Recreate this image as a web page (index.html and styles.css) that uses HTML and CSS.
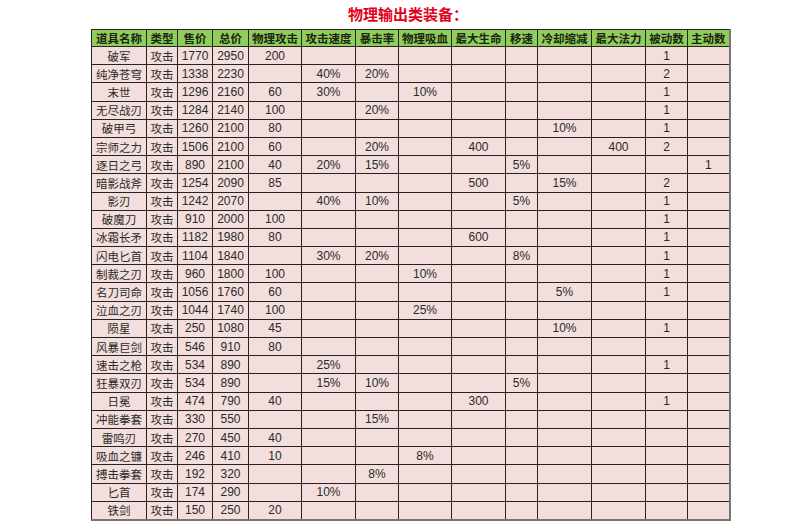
FILE: index.html
```html
<!DOCTYPE html>
<html lang="zh">
<head>
<meta charset="utf-8">
<link rel="stylesheet" href="styles.css">
</head>
<body>
<div class="page">
  <h1 class="title">物理输出类装备：</h1>
  <table class="equip">
    <colgroup>
      <col class="c55"><col class="c31"><col class="c35"><col class="c36"><col class="c53"><col class="c54"><col class="c43"><col class="c53"><col class="c54"><col class="c32"><col class="c54"><col class="c54"><col class="c42"><col class="c42">
    </colgroup>
    <thead>
      <tr><th>道具名称</th><th>类型</th><th>售价</th><th>总价</th><th>物理攻击</th><th>攻击速度</th><th>暴击率</th><th>物理吸血</th><th>最大生命</th><th>移速</th><th>冷却缩减</th><th>最大法力</th><th>被动数</th><th>主动数</th></tr>
    </thead>
    <tbody>
      <tr><td>破军</td><td>攻击</td><td>1770</td><td>2950</td><td>200</td><td></td><td></td><td></td><td></td><td></td><td></td><td></td><td>1</td><td></td></tr>
      <tr><td>纯净苍穹</td><td>攻击</td><td>1338</td><td>2230</td><td></td><td>40%</td><td>20%</td><td></td><td></td><td></td><td></td><td></td><td>2</td><td></td></tr>
      <tr><td>末世</td><td>攻击</td><td>1296</td><td>2160</td><td>60</td><td>30%</td><td></td><td>10%</td><td></td><td></td><td></td><td></td><td>1</td><td></td></tr>
      <tr><td>无尽战刃</td><td>攻击</td><td>1284</td><td>2140</td><td>100</td><td></td><td>20%</td><td></td><td></td><td></td><td></td><td></td><td>1</td><td></td></tr>
      <tr><td>破甲弓</td><td>攻击</td><td>1260</td><td>2100</td><td>80</td><td></td><td></td><td></td><td></td><td></td><td>10%</td><td></td><td>1</td><td></td></tr>
      <tr><td>宗师之力</td><td>攻击</td><td>1506</td><td>2100</td><td>60</td><td></td><td>20%</td><td></td><td>400</td><td></td><td></td><td>400</td><td>2</td><td></td></tr>
      <tr><td>逐日之弓</td><td>攻击</td><td>890</td><td>2100</td><td>40</td><td>20%</td><td>15%</td><td></td><td></td><td>5%</td><td></td><td></td><td></td><td>1</td></tr>
      <tr><td>暗影战斧</td><td>攻击</td><td>1254</td><td>2090</td><td>85</td><td></td><td></td><td></td><td>500</td><td></td><td>15%</td><td></td><td>2</td><td></td></tr>
      <tr><td>影刃</td><td>攻击</td><td>1242</td><td>2070</td><td></td><td>40%</td><td>10%</td><td></td><td></td><td>5%</td><td></td><td></td><td>1</td><td></td></tr>
      <tr><td>破魔刀</td><td>攻击</td><td>910</td><td>2000</td><td>100</td><td></td><td></td><td></td><td></td><td></td><td></td><td></td><td>1</td><td></td></tr>
      <tr><td>冰霜长矛</td><td>攻击</td><td>1182</td><td>1980</td><td>80</td><td></td><td></td><td></td><td>600</td><td></td><td></td><td></td><td>1</td><td></td></tr>
      <tr><td>闪电匕首</td><td>攻击</td><td>1104</td><td>1840</td><td></td><td>30%</td><td>20%</td><td></td><td></td><td>8%</td><td></td><td></td><td>1</td><td></td></tr>
      <tr><td>制裁之刃</td><td>攻击</td><td>960</td><td>1800</td><td>100</td><td></td><td></td><td>10%</td><td></td><td></td><td></td><td></td><td>1</td><td></td></tr>
      <tr><td>名刀司命</td><td>攻击</td><td>1056</td><td>1760</td><td>60</td><td></td><td></td><td></td><td></td><td></td><td>5%</td><td></td><td>1</td><td></td></tr>
      <tr><td>泣血之刃</td><td>攻击</td><td>1044</td><td>1740</td><td>100</td><td></td><td></td><td>25%</td><td></td><td></td><td></td><td></td><td></td><td></td></tr>
      <tr><td>陨星</td><td>攻击</td><td>250</td><td>1080</td><td>45</td><td></td><td></td><td></td><td></td><td></td><td>10%</td><td></td><td>1</td><td></td></tr>
      <tr><td>风暴巨剑</td><td>攻击</td><td>546</td><td>910</td><td>80</td><td></td><td></td><td></td><td></td><td></td><td></td><td></td><td></td><td></td></tr>
      <tr><td>速击之枪</td><td>攻击</td><td>534</td><td>890</td><td></td><td>25%</td><td></td><td></td><td></td><td></td><td></td><td></td><td>1</td><td></td></tr>
      <tr><td>狂暴双刃</td><td>攻击</td><td>534</td><td>890</td><td></td><td>15%</td><td>10%</td><td></td><td></td><td>5%</td><td></td><td></td><td></td><td></td></tr>
      <tr><td>日冕</td><td>攻击</td><td>474</td><td>790</td><td>40</td><td></td><td></td><td></td><td>300</td><td></td><td></td><td></td><td>1</td><td></td></tr>
      <tr><td>冲能拳套</td><td>攻击</td><td>330</td><td>550</td><td></td><td></td><td>15%</td><td></td><td></td><td></td><td></td><td></td><td></td><td></td></tr>
      <tr><td>雷鸣刃</td><td>攻击</td><td>270</td><td>450</td><td>40</td><td></td><td></td><td></td><td></td><td></td><td></td><td></td><td></td><td></td></tr>
      <tr><td>吸血之镰</td><td>攻击</td><td>246</td><td>410</td><td>10</td><td></td><td></td><td>8%</td><td></td><td></td><td></td><td></td><td></td><td></td></tr>
      <tr><td>搏击拳套</td><td>攻击</td><td>192</td><td>320</td><td></td><td></td><td>8%</td><td></td><td></td><td></td><td></td><td></td><td></td><td></td></tr>
      <tr><td>匕首</td><td>攻击</td><td>174</td><td>290</td><td></td><td>10%</td><td></td><td></td><td></td><td></td><td></td><td></td><td></td><td></td></tr>
      <tr><td>铁剑</td><td>攻击</td><td>150</td><td>250</td><td>20</td><td></td><td></td><td></td><td></td><td></td><td></td><td></td><td></td><td></td></tr>
    </tbody>
  </table>
</div>
</body>
</html>
```

FILE: styles.css
```css
html, body {
  margin: 0;
  padding: 0;
  background: #ffffff;
}
body {
  font-family: "Liberation Sans", "Noto Sans CJK SC", sans-serif;
  color: #2a2a2a;
}
.page {
  padding: 0 0 0 91px;
  width: 640px;
}
.title {
  margin: 0;
  height: 29px;
  line-height: 27px;
  font-size: 15px;
  font-weight: bold;
  color: #e3001b;
  text-align: center;
  font-family: "Noto Sans CJK SC", sans-serif;
  padding-right: 6px;
}
.equip {
  border-collapse: collapse;
  table-layout: fixed;
  width: 638px;
  font-size: 12px;
  border-right: 2px solid #7a7470;
  border-bottom: 2px solid #7a7470;
}
.c55 { width: 55px; }
.c31 { width: 31px; }
.c35 { width: 35px; }
.c36 { width: 36px; }
.c53 { width: 53px; }
.c54 { width: 54px; }
.c43 { width: 43px; }
.c32 { width: 32px; }
.c42 { width: 42px; }
.equip th,
.equip td {
  border: 1px solid #2b2220;
  padding: 0;
  text-align: center;
  white-space: nowrap;
  overflow: hidden;
  line-height: 16px;
}
.equip th {
  height: 16px;
  background: #8fcd5c;
  font-weight: bold;
  color: #1b2410;
  font-size: 11.5px;
  font-family: "Noto Sans CJK SC", sans-serif;
}
.equip td {
  height: 17.2px;
  background: #f2dedc;
}
.equip td:first-child,
.equip td:nth-child(2) {
  font-family: "Noto Sans CJK SC", sans-serif;
  font-size: 11.5px;
}
```
